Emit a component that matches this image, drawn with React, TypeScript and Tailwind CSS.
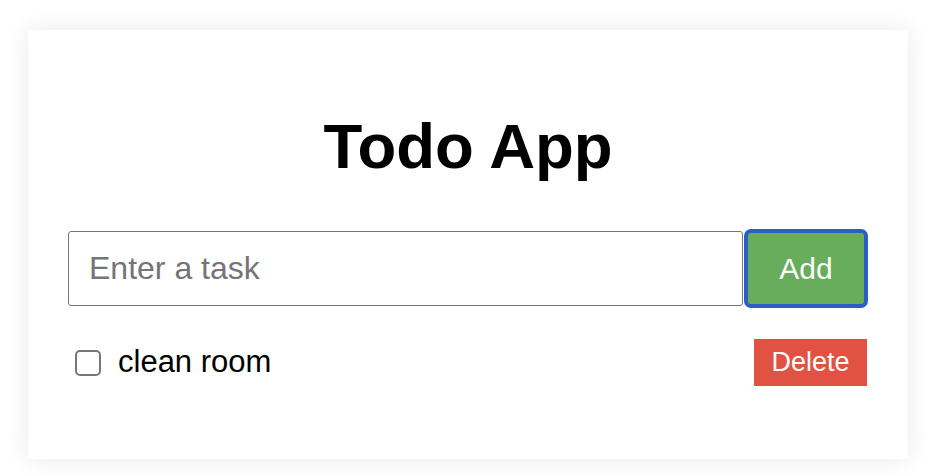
import { useState } from "react";

type Todo = { id: number; text: string; done: boolean };

function App() {
  const [task, setTask] = useState("");
  const [todos, setTodos] = useState<Todo[]>([
    { id: 1, text: "clean room", done: false },
  ]);

  const addTodo = () => {
    if (!task.trim()) return;
    setTodos([...todos, { id: Date.now(), text: task.trim(), done: false }]);
    setTask("");
  };

  return (
    <div className="min-h-screen bg-white pt-[30px] font-['Liberation_Sans',Arial,sans-serif]">
      <div className="mx-auto w-[880px] bg-white px-[40px] pt-[40px] pb-[73px] shadow-[0_0_22px_rgba(0,0,0,0.09)]">
        <h1 className="mt-[42px] mb-[48px] text-center text-[63.5px] font-bold leading-[69px] text-black">
          Todo App
        </h1>
        <div className="flex h-[79px] items-center">
          <input
            className="h-[75px] flex-1 rounded-[3px] border-[1.5px] border-[#767676] px-[20px] text-[32px] text-black placeholder:text-[#757575] outline-none"
            placeholder="Enter a task"
            value={task}
            onChange={(e) => setTask(e.target.value)}
          />
          <button
            onClick={addTodo}
            className="ml-px h-[79px] w-[124px] rounded-[7px] border-[4px] border-[#2a5fc8] bg-[#67ad5b] text-[30px] text-white"
          >
            Add
          </button>
        </div>
        <ul className="mt-[31px]">
          {todos.map((todo) => (
            <li key={todo.id} className="flex h-[47px] items-center justify-between">
              <label className="flex items-center">
                <input
                  type="checkbox"
                  checked={todo.done}
                  onChange={() =>
                    setTodos(todos.map((t) => (t.id === todo.id ? { ...t, done: !t.done } : t)))
                  }
                  className="ml-[7px] h-[26px] w-[26px] appearance-none rounded-[5px] border-2 border-[#767676] bg-white"
                />
                <span className="ml-[17px] text-[31px] text-black">{todo.text}</span>
              </label>
              <button
                onClick={() => setTodos(todos.filter((t) => t.id !== todo.id))}
                className="mr-px h-[47px] w-[113px] bg-[#e25242] text-[27px] text-white"
              >
                Delete
              </button>
            </li>
          ))}
        </ul>
      </div>
    </div>
  );
}

export default App;
